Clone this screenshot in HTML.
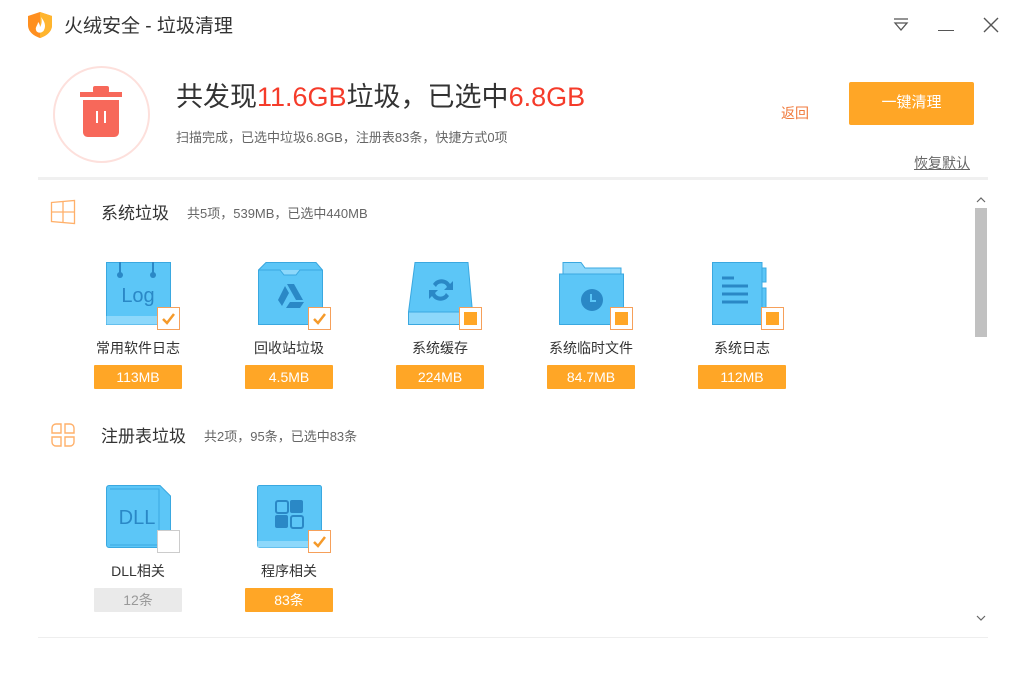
<!DOCTYPE html>
<html><head><meta charset="utf-8"><style>
*{margin:0;padding:0;box-sizing:border-box}
body{width:1025px;height:675px;background:#fff;position:relative;overflow:hidden;font-family:"Liberation Sans","Noto Sans CJK SC",sans-serif;color:#333}
.a{position:absolute;white-space:nowrap}
.lbl{font-size:14px;color:#333;text-align:center;width:120px}
.badge{width:88px;height:24px;line-height:24px;text-align:center;color:#fff;background:#ffa626;font-size:14px;border-radius:1px}
.cb{width:23px;height:23px;background:#fff;border:1px solid #f6a05a}
</style></head><body>
<svg class="a" style="left:27px;top:11px" width="26" height="28" viewBox="0 0 26 28"><path d="M13 1 L25 5 V14 C25 21 19 25 13 27 C7 25 1 21 1 14 V5 Z" fill="#ff8f1f"/><path d="M13 1 L25 5 V14 C25 21 19 25 13 27 Z" fill="#ffb52e"/><path d="M14 6 C18 11 19 15 17 19 C16 22 10 23 9 19 C8 16 11 14 11 11 C13 13 13 15 13 16 C15 13 15 9 14 6Z" fill="#fff"/></svg>
<div class="a" style="left:64px;top:11px;font-size:19px;color:#333">火绒安全 - 垃圾清理</div>
<svg class="a" style="left:892px;top:16px" width="18" height="16"><path d="M2 3H16M3 7L9 14L15 7Z" stroke="#555" stroke-width="1.3" fill="none"/></svg>
<div class="a" style="left:938px;top:30px;width:16px;height:1px;background:#555"></div>
<svg class="a" style="left:983px;top:17px" width="16" height="16"><path d="M1 1L15 15M15 1L1 15" stroke="#555" stroke-width="1.4"/></svg>

<div class="a" style="left:53px;top:66px;width:97px;height:97px;border-radius:50%;border:2px solid #fde0dc"></div>
<svg class="a" style="left:80px;top:86px" width="42" height="52" viewBox="0 0 42 52"><rect x="0" y="6" width="42" height="5" fill="#f7685a"/><rect x="13" y="0" width="16" height="7" rx="2" fill="#f7685a"/><path d="M3 14H39V46C39 49 37 51 34 51H8C5 51 3 49 3 46Z" fill="#f7685a"/><rect x="16" y="25" width="2" height="12" fill="#fff"/><rect x="24" y="25" width="2" height="12" fill="#fff"/></svg>

<div class="a" style="left:176px;top:75px;font-size:27px;color:#333">共发现<span style="color:#f53b2a">11.6GB</span>垃圾，已选中<span style="color:#f53b2a">6.8GB</span></div>
<div class="a" style="left:176px;top:127px;font-size:13px;color:#666">扫描完成，已选中垃圾6.8GB，注册表83条，快捷方式0项</div>
<div class="a" style="left:781px;top:103px;font-size:14px;color:#f07a3c">返回</div>
<div class="a" style="left:849px;top:82px;width:125px;height:43px;background:#ffa626;border-radius:2px;color:#fff;font-size:15px;text-align:center;line-height:42px">一键清理</div>
<div class="a" style="left:914px;top:153px;font-size:14px;color:#666;text-decoration:underline">恢复默认</div>
<div class="a" style="left:38px;top:177px;width:950px;height:3px;background:#f0f0f0"></div>

<svg class="a" style="left:50px;top:199px" width="26" height="26"><path d="M1.5 3.5L24.5 1.5V24.5L1.5 22.5Z M1.5 13H24.5 M13 2.5V23.5" stroke="#ffb06a" stroke-width="1.3" fill="none"/></svg>
<div class="a" style="left:101px;top:199px;font-size:17px;color:#333">系统垃圾</div>
<div class="a" style="left:187px;top:203px;font-size:13px;color:#666">共5项，539MB，已选中440MB</div>

<svg class="a" style="left:106px;top:262px" width="66" height="64"><rect x="0.5" y="0.5" width="64" height="62" fill="#5cc6f7" stroke="#3aa8e0"/><rect x="0.5" y="54" width="64" height="8.5" fill="#8dd8fb"/><path d="M14 0V12M47 0V12" stroke="#2a88c6" stroke-width="2"/><circle cx="14" cy="13" r="3" fill="#2a88c6"/><circle cx="47" cy="13" r="3" fill="#2a88c6"/><text x="32" y="40" text-anchor="middle" font-size="20" font-family="Liberation Sans" fill="#2a88c6">Log</text></svg>
<div class="a cb" style="left:157px;top:307px"><svg width="21" height="21"><path d="M5 11L9 15L16 6" stroke="#f59a2a" stroke-width="2.5" fill="none"/></svg></div>
<div class="a lbl" style="left:78px;top:338px">常用软件日志</div>
<div class="a badge" style="left:94px;top:365px">113MB</div>

<svg class="a" style="left:258px;top:262px" width="66" height="64"><path d="M8 0.5H58L64.5 8V62.5H0.5V8Z" fill="#5cc6f7" stroke="#3aa8e0"/><path d="M0.5 8H22L26 13H38L42 8H64.5" stroke="#3aa8e0" fill="#8dd8fb"/><path d="M29 22H36L45 38H38Z M27 24L31 31L24 44L20 38Z M32 40H46L42 46H28Z" fill="#2a88c6"/></svg>
<div class="a cb" style="left:308px;top:307px"><svg width="21" height="21"><path d="M5 11L9 15L16 6" stroke="#f59a2a" stroke-width="2.5" fill="none"/></svg></div>
<div class="a lbl" style="left:229px;top:338px">回收站垃圾</div>
<div class="a badge" style="left:245px;top:365px">4.5MB</div>

<svg class="a" style="left:408px;top:262px" width="66" height="64"><path d="M7 0.5H60L64.5 50V62.5H0.5V50Z" fill="#5cc6f7" stroke="#3aa8e0"/><rect x="0.5" y="50" width="64" height="12.5" fill="#8dd8fb" stroke="#3aa8e0"/><path d="M25 22A10 10 0 0 1 42 22L45 19V28H36L39 25A6 6 0 0 0 28 25Z M41 34A10 10 0 0 1 24 34L21 37V28H30L27 31A6 6 0 0 0 38 31Z" fill="#2a88c6"/></svg>
<div class="a cb" style="left:459px;top:307px"><div style="margin:4px;width:13px;height:13px;background:#ffa626"></div></div>
<div class="a lbl" style="left:380px;top:338px">系统缓存</div>
<div class="a badge" style="left:396px;top:365px">224MB</div>

<svg class="a" style="left:559px;top:262px" width="66" height="64"><path d="M4 0.5H22L26 6H62V62.5H4Z" fill="#8dd8fb" stroke="#3aa8e0"/><path d="M0.5 12H64.5V62.5H0.5Z" fill="#5cc6f7" stroke="#3aa8e0"/><circle cx="33" cy="38" r="11" fill="#2a88c6"/><path d="M32 32V39H37" stroke="#5cc6f7" stroke-width="2" fill="none"/></svg>
<div class="a cb" style="left:610px;top:307px"><div style="margin:4px;width:13px;height:13px;background:#ffa626"></div></div>
<div class="a lbl" style="left:531px;top:338px">系统临时文件</div>
<div class="a badge" style="left:547px;top:365px">84.7MB</div>

<svg class="a" style="left:712px;top:262px" width="66" height="64"><path d="M0.5 0.5H50V6H54V20H50V26H54V62.5H0.5Z" fill="#5cc6f7" stroke="#3aa8e0"/><path d="M50 6V62" stroke="#3aa8e0"/><path d="M10 16H22M10 24H36M10 32H36M10 40H36" stroke="#2a88c6" stroke-width="3"/></svg>
<div class="a cb" style="left:761px;top:307px"><div style="margin:4px;width:13px;height:13px;background:#ffa626"></div></div>
<div class="a lbl" style="left:682px;top:338px">系统日志</div>
<div class="a badge" style="left:698px;top:365px">112MB</div>

<svg class="a" style="left:50px;top:422px" width="26" height="26"><path d="M6 2H11V11H2V6A4 4 0 0 1 6 2Z M15 2H20A4 4 0 0 1 24 6V11H15Z M2 15H11V24H6A4 4 0 0 1 2 20Z M15 15H24V20A4 4 0 0 1 20 24H15Z" stroke="#ffb06a" stroke-width="1.4" fill="none"/></svg>
<div class="a" style="left:101px;top:422px;font-size:17px;color:#333">注册表垃圾</div>
<div class="a" style="left:204px;top:426px;font-size:13px;color:#666">共2项，95条，已选中83条</div>

<svg class="a" style="left:106px;top:485px" width="66" height="64"><path d="M3 0.5H54L64.5 11V60A2.5 2.5 0 0 1 62 62.5H3A2.5 2.5 0 0 1 0.5 60V3A2.5 2.5 0 0 1 3 0.5Z" fill="#5cc6f7" stroke="#3aa8e0"/><path d="M4 4H53V60H4" stroke="#3aa8e0" fill="none"/><text x="31" y="39" text-anchor="middle" font-size="20" font-family="Liberation Sans" fill="#2a88c6">DLL</text></svg>
<div class="a cb" style="left:157px;top:530px;border-color:#ccc"></div>
<div class="a lbl" style="left:78px;top:561px">DLL相关</div>
<div class="a badge" style="left:94px;top:588px;background:#eaeaea;color:#999">12条</div>

<svg class="a" style="left:257px;top:485px" width="66" height="64"><rect x="0.5" y="0.5" width="64" height="62" rx="2" fill="#5cc6f7" stroke="#3aa8e0"/><rect x="0.5" y="56" width="64" height="6.5" fill="#8dd8fb"/><rect x="19" y="16" width="12" height="12" rx="2" fill="none" stroke="#2a88c6" stroke-width="2"/><rect x="33" y="15" width="13" height="13" rx="2" fill="#2a88c6"/><rect x="18" y="30" width="13" height="13" rx="2" fill="#2a88c6"/><rect x="34" y="31" width="12" height="12" rx="2" fill="none" stroke="#2a88c6" stroke-width="2"/></svg>
<div class="a cb" style="left:308px;top:530px"><svg width="21" height="21"><path d="M5 11L9 15L16 6" stroke="#f59a2a" stroke-width="2.5" fill="none"/></svg></div>
<div class="a lbl" style="left:229px;top:561px">程序相关</div>
<div class="a badge" style="left:245px;top:588px">83条</div>

<svg class="a" style="left:976px;top:196px" width="10" height="8"><path d="M1 6L5 2L9 6" stroke="#666" stroke-width="1.2" fill="none"/></svg>
<div class="a" style="left:975px;top:208px;width:12px;height:129px;background:#c1c1c1"></div>
<svg class="a" style="left:976px;top:614px" width="10" height="8"><path d="M1 2L5 6L9 2" stroke="#666" stroke-width="1.2" fill="none"/></svg>
<div class="a" style="left:38px;top:637px;width:950px;height:1px;background:#eee"></div>
</body></html>
